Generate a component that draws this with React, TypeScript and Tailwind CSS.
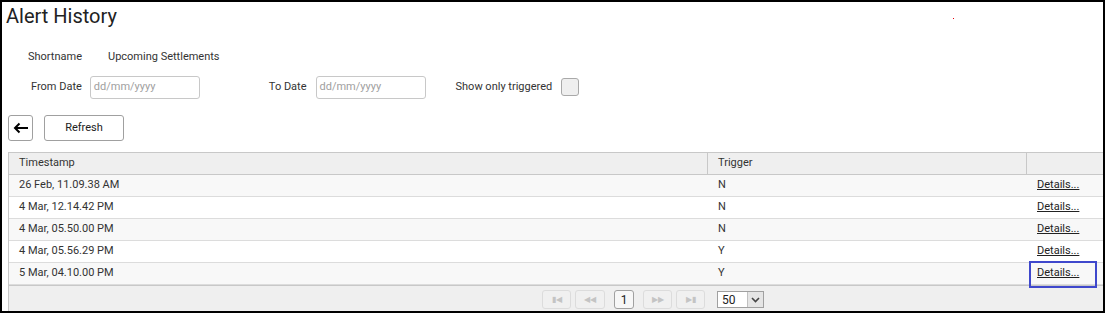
import React from "react";

const rows = [
  { ts: "26 Feb, 11.09.38 AM", t: "N" },
  { ts: "4 Mar, 12.14.42 PM", t: "N" },
  { ts: "4 Mar, 05.50.00 PM", t: "N" },
  { ts: "4 Mar, 05.56.29 PM", t: "Y" },
  { ts: "5 Mar, 04.10.00 PM", t: "Y" },
];

function PageBtn({ children, w = "w-[29px]" }: { children: React.ReactNode; w?: string }) {
  return (
    <div className={`${w} h-[19px] border border-[#dcdcdc] rounded-[3px] bg-[#f0f0f0] flex items-center justify-center text-[8px] text-[#c4c4c4]`}>
      {children}
    </div>
  );
}

export default function App() {
  return (
    <div
      className="w-[1105px] h-[313px] border-2 border-black bg-white relative text-[#333] overflow-hidden"
      style={{ fontFamily: "Roboto, 'Liberation Sans', sans-serif" }}
    >
      <div className="absolute left-[951px] top-[16px] w-[1px] h-[1px] bg-red-600" />
      <div className="pl-[4px] pt-[1px] text-[20px] leading-[26px] text-[#222]">Alert History</div>

      <div className="flex items-center text-[11px] mt-[21px] h-[14px]">
        <span className="ml-[26px]">Shortname</span>
        <span className="ml-[26px]">Upcoming Settlements</span>
      </div>

      <div className="flex items-center text-[11px] mt-[11px] h-[24px]">
        <span className="ml-[29px]">From Date</span>
        <div className="ml-[8px] w-[110px] h-[23px] border border-[#c8c8c8] rounded-[3px] px-[3px] flex items-center text-[#a0a0a0]">dd/mm/yyyy</div>
        <span className="ml-[69px]">To Date</span>
        <div className="ml-[9px] w-[110px] h-[23px] border border-[#c8c8c8] rounded-[3px] px-[3px] flex items-center text-[#a0a0a0]">dd/mm/yyyy</div>
        <span className="ml-[30px]">Show only triggered</span>
        <div className="ml-[9px] w-[18px] h-[18px] border border-[#a9a9a9] rounded-[3px] bg-[#efefef]" />
      </div>

      <div className="flex items-center mt-[16px] ml-[6px] gap-[11px]">
        <div className="w-[25px] h-[26px] border border-[#a0a0a0] rounded-[3px] flex items-center justify-center">
          <svg width="16" height="12" viewBox="0 0 16 12">
            <path d="M15 6H2M6.5 1.5L2 6l4.5 4.5" stroke="#000" strokeWidth="2" fill="none" />
          </svg>
        </div>
        <div className="w-[80px] h-[26px] border border-[#a0a0a0] rounded-[3px] flex items-center justify-center text-[11px] text-[#222]">Refresh</div>
      </div>

      <div className="ml-[6px] mt-[11px] border-l border-t border-[#c8c8c8]">
        <div className="grid grid-cols-[699px_319px_1fr] h-[22px] bg-[#efefef] border-b border-[#c8c8c8] text-[11px]">
          <div className="pl-[10px] flex items-center border-r border-[#c8c8c8]">Timestamp</div>
          <div className="pl-[10px] flex items-center border-r border-[#c8c8c8]">Trigger</div>
          <div />
        </div>
        {rows.map((r, i) => (
          <div
            key={i}
            className={`grid grid-cols-[699px_319px_1fr] h-[22px] border-b border-[#dcdcdc] text-[11px] ${i % 2 === 0 ? "bg-[#f8f8f8]" : "bg-white"}`}
          >
            <div className="pl-[10px] flex items-center">{r.ts}</div>
            <div className="pl-[10px] flex items-center">{r.t}</div>
            <div className="pl-[10px] flex items-center relative">
              <span className="underline text-[#222]">Details...</span>
              {i === 4 && <div className="absolute left-[2px] top-[-2px] w-[68px] h-[27px] border-2 border-[#3f48cc]" />}
            </div>
          </div>
        ))}
        <div className="h-[28px] bg-[#efefef] border-t border-[#c8c8c8] flex items-center">
          <div className="ml-[533px] flex items-center gap-[4px]">
            <PageBtn>▮◀</PageBtn>
            <PageBtn w="w-[30px]">◀◀</PageBtn>
            <div className="ml-[5px] w-[20px] h-[19px] border border-[#a0a0a0] rounded-[3px] bg-[#f7f7f7] flex items-center justify-center text-[12px] text-[#222]">1</div>
            <div className="ml-[5px]"><PageBtn>▶▶</PageBtn></div>
            <PageBtn>▶▮</PageBtn>
            <div className="ml-[8px] w-[47px] h-[17px] border border-[#a0a0a0] bg-white flex items-center text-[12px] text-[#222]">
              <span className="pl-[4px] flex-1">50</span>
              <div className="w-[16px] h-full bg-[#e5e5e5] border-l border-[#c0c0c0] flex items-center justify-center">
                <svg width="9" height="6" viewBox="0 0 9 6"><path d="M1 1l3.5 3.5L8 1" stroke="#444" strokeWidth="1.6" fill="none" /></svg>
              </div>
            </div>
          </div>
        </div>
      </div>
    </div>
  );
}
